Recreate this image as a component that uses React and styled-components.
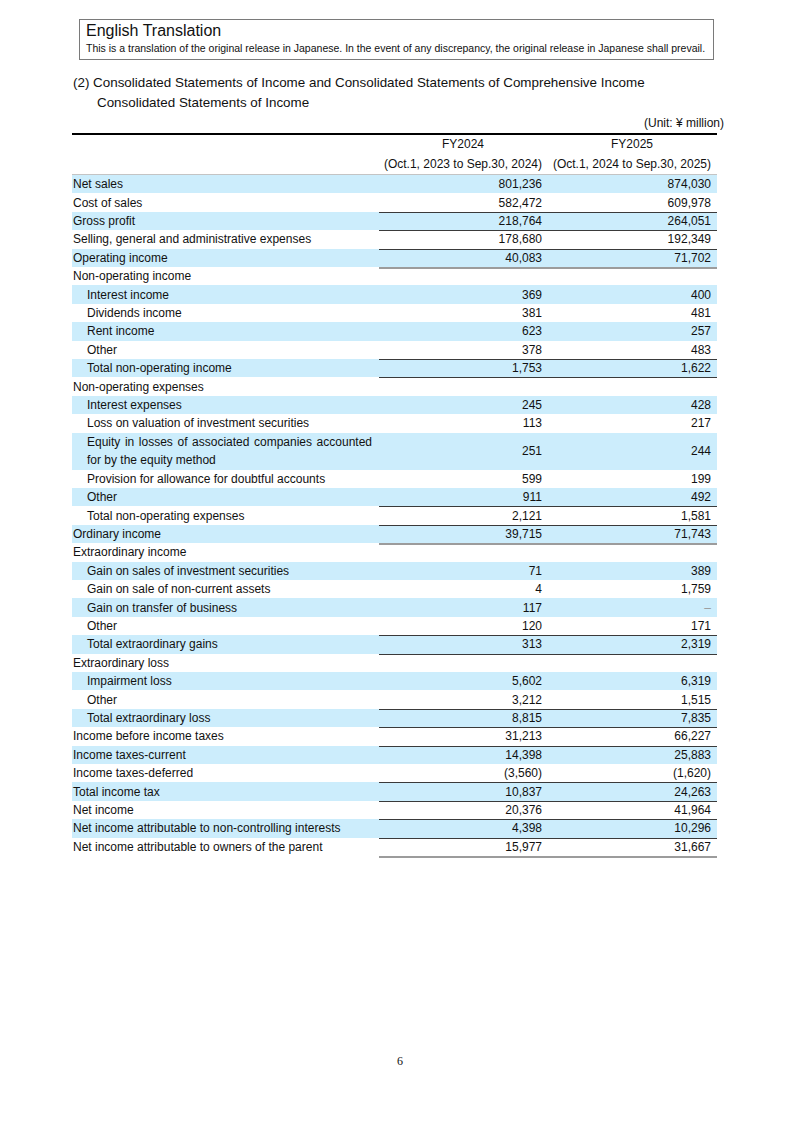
import React from 'react';
import styled, { createGlobalStyle } from 'styled-components';

const GlobalStyle = createGlobalStyle`
  body {
    margin: 0;
    background: #fff;
    color: #111;
    font-family: "Liberation Sans", Arial, sans-serif;
  }
`;

const rows = [
  { label: 'Net sales', a: '801,236', b: '874,030' },
  { label: 'Cost of sales', a: '582,472', b: '609,978' },
  { label: 'Gross profit', a: '218,764', b: '264,051', top: true, bottom: 'thin' },
  { label: 'Selling, general and administrative expenses', a: '178,680', b: '192,349' },
  { label: 'Operating income', a: '40,083', b: '71,702', top: true, bottom: 'double' },
  { label: 'Non-operating income' },
  { label: 'Interest income', indent: true, a: '369', b: '400' },
  { label: 'Dividends income', indent: true, a: '381', b: '481' },
  { label: 'Rent income', indent: true, a: '623', b: '257' },
  { label: 'Other', indent: true, a: '378', b: '483' },
  { label: 'Total non-operating income', indent: true, a: '1,753', b: '1,622', top: true, bottom: 'thin' },
  { label: 'Non-operating expenses' },
  { label: 'Interest expenses', indent: true, a: '245', b: '428' },
  { label: 'Loss on valuation of investment securities', indent: true, a: '113', b: '217' },
  {
    label: ['Equity in losses of associated companies accounted', 'for by the equity method'],
    indent: true, a: '251', b: '244',
  },
  { label: 'Provision for allowance for doubtful accounts', indent: true, a: '599', b: '199' },
  { label: 'Other', indent: true, a: '911', b: '492' },
  { label: 'Total non-operating expenses', indent: true, a: '2,121', b: '1,581', top: true },
  { label: 'Ordinary income', a: '39,715', b: '71,743', top: true, bottom: 'double' },
  { label: 'Extraordinary income' },
  { label: 'Gain on sales of investment securities', indent: true, a: '71', b: '389' },
  { label: 'Gain on sale of non-current assets', indent: true, a: '4', b: '1,759' },
  { label: 'Gain on transfer of business', indent: true, a: '117', b: '–', dash: true },
  { label: 'Other', indent: true, a: '120', b: '171' },
  { label: 'Total extraordinary gains', indent: true, a: '313', b: '2,319', top: true, bottom: 'thin' },
  { label: 'Extraordinary loss' },
  { label: 'Impairment loss', indent: true, a: '5,602', b: '6,319' },
  { label: 'Other', indent: true, a: '3,212', b: '1,515' },
  { label: 'Total extraordinary loss', indent: true, a: '8,815', b: '7,835', top: true, bottom: 'thin' },
  { label: 'Income before income taxes', a: '31,213', b: '66,227', bottom: 'thin' },
  { label: 'Income taxes-current', a: '14,398', b: '25,883' },
  { label: 'Income taxes-deferred', a: '(3,560)', b: '(1,620)' },
  { label: 'Total income tax', a: '10,837', b: '24,263', top: true, bottom: 'thin' },
  { label: 'Net income', a: '20,376', b: '41,964', bottom: 'thin' },
  { label: 'Net income attributable to non-controlling interests', a: '4,398', b: '10,296', bottom: 'thin' },
  { label: 'Net income attributable to owners of the parent', a: '15,977', b: '31,667', bottom: 'double' },
];

const ROW = 18.42;

const Page = styled.div`
  width: 800px;
  min-height: 1131px;
  display: flex;
  flex-direction: column;
  padding-top: 19px;
  box-sizing: border-box;
`;

const Notice = styled.div`
  margin-left: 79px;
  width: 635px;
  box-sizing: border-box;
  border: 1px solid #7a7a7a;
  padding: 1px 6px 5px;
`;

const NoticeTitle = styled.div`
  font-size: 16px;
  line-height: 19px;
`;

const NoticeText = styled.div`
  margin-top: 2px;
  font-size: 10.5px;
  line-height: 12px;
  white-space: nowrap;
`;

const Heading = styled.div`
  margin: 13px 0 0 73px;
  font-size: 13.4px;
  line-height: 20px;
  white-space: nowrap;
`;

const SubHeading = styled(Heading)`
  margin: 0 0 0 97px;
`;

const Unit = styled.div`
  margin: 1px 0 0 72px;
  width: 652px;
  text-align: right;
  font-size: 12px;
  line-height: 18px;
`;

const Table = styled.div`
  margin: 1px 0 0 72px;
  width: 645px;
  border-top: 2px solid #000;
  font-size: 12px;
`;

const Grid = styled.div`
  display: grid;
  grid-template-columns: 307px 168px 170px;
`;

const Head = styled(Grid)`
  border-bottom: 1px solid #c4c4c4;
`;

const HeadCell = styled.div`
  grid-column: ${p => p.$col};
  text-align: center;
  line-height: 19.5px;
  white-space: nowrap;
`;

const Row = styled(Grid)`
  height: ${p => ROW * p.$lines}px;
  background: ${p => (p.$shade ? '#ccedfc' : '#fff')};
`;

const Label = styled.div`
  padding: 0 7px 0 ${p => (p.$indent ? '15px' : '1px')};
  line-height: 18px;
  white-space: nowrap;
  display: flex;
  flex-direction: column;
  justify-content: center;
`;

const JustifiedLine = styled.span`
  display: block;
  white-space: normal;
  text-align: justify;
  text-align-last: justify;
`;

const Num = styled.div`
  position: relative;
  display: flex;
  align-items: center;
  justify-content: flex-end;
  padding-right: ${p => p.$pad}px;
  line-height: 18px;
  color: ${p => (p.$dash ? '#9a9a9a' : 'inherit')};

  &::before {
    content: '';
    display: ${p => (p.$top ? 'block' : 'none')};
    position: absolute;
    left: 0;
    right: 0;
    top: 0;
    height: 1px;
    background: #3a3a3a;
    z-index: 1;
  }

  &::after {
    content: '';
    display: ${p => (p.$bottom ? 'block' : 'none')};
    position: absolute;
    left: 0;
    right: 0;
    bottom: ${p => (p.$bottom === 'double' ? -2 : -1)}px;
    height: ${p => (p.$bottom === 'double' ? 2 : 1)}px;
    background: ${p => (p.$bottom === 'double' ? '#9c9c9c' : '#3a3a3a')};
    z-index: 1;
  }
`;

const PageNumber = styled.div`
  margin-top: auto;
  padding-bottom: 62px;
  text-align: center;
  font-family: "Liberation Serif", "Times New Roman", serif;
  font-size: 12px;
  line-height: 16px;
`;

export default function App() {
  return (
    <Page>
      <GlobalStyle />
      <Notice>
        <NoticeTitle>English Translation</NoticeTitle>
        <NoticeText>
          This is a translation of the original release in Japanese. In the event of any discrepancy, the original release in Japanese shall prevail.
        </NoticeText>
      </Notice>

      <Heading>
        (2) Consolidated Statements of Income and Consolidated Statements of Comprehensive Income
      </Heading>
      <SubHeading>Consolidated Statements of Income</SubHeading>

      <Unit>(Unit: ¥ million)</Unit>
      <Table>
        <Head>
          <HeadCell $col={2}>FY2024</HeadCell>
          <HeadCell $col={3}>FY2025</HeadCell>
          <HeadCell $col={2}>(Oct.1, 2023 to Sep.30, 2024)</HeadCell>
          <HeadCell $col={3}>(Oct.1, 2024 to Sep.30, 2025)</HeadCell>
        </Head>
        {rows.map((r, i) => {
          const multi = Array.isArray(r.label);
          return (
            <Row key={i} $shade={i % 2 === 0} $lines={multi ? 2 : 1}>
              <Label $indent={r.indent}>
                {multi ? (
                  <>
                    <JustifiedLine>{r.label[0]}</JustifiedLine>
                    <span>{r.label[1]}</span>
                  </>
                ) : r.label}
              </Label>
              <Num $pad={5} $top={r.top} $bottom={r.bottom}>{r.a}</Num>
              <Num $pad={6} $top={r.top} $bottom={r.bottom} $dash={r.dash}>{r.b}</Num>
            </Row>
          );
        })}
      </Table>

      <PageNumber>6</PageNumber>
    </Page>
  );
}
